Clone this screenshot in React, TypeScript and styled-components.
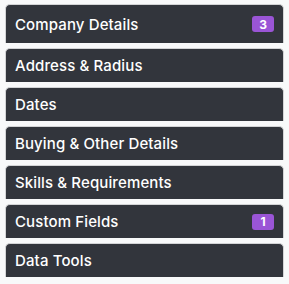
import React from 'react';
import styled, { createGlobalStyle } from 'styled-components';

const GlobalStyle = createGlobalStyle`
  html, body {
    margin: 0;
    padding: 0;
    background: #f8f9fa;
    font-family: Inter, "Noto Sans", sans-serif;
  }
`;

const List = styled.div`
  display: flex;
  flex-direction: column;
  gap: 5px;
  padding: 4px 5px 0 5px;
`;

const Header = styled.div<{ $tall?: boolean }>`
  display: flex;
  align-items: center;
  justify-content: space-between;
  box-sizing: border-box;
  height: ${(p) => (p.$tall ? '39px' : '34px')};
  padding: 0 9px 0 9px;
  background: #32353c;
  border: 1px solid #d3d4d6;
  border-bottom: none;
  border-radius: 5px 5px 0 0;
  color: #ffffff;
  font-size: 15px;
  font-weight: 500;
  letter-spacing: 0.12px;
  cursor: pointer;
`;

const Badge = styled.span`
  display: inline-flex;
  align-items: center;
  justify-content: center;
  min-width: 22px;
  height: 16px;
  padding: 0 5px;
  box-sizing: border-box;
  border-radius: 3px;
  background: #9a55d6;
  color: #fff;
  font-size: 12px;
  font-weight: 700;
  letter-spacing: 0;
`;

const sections = [
  { title: 'Company Details', count: 3, tall: true },
  { title: 'Address & Radius' },
  { title: 'Dates' },
  { title: 'Buying & Other Details' },
  { title: 'Skills & Requirements' },
  { title: 'Custom Fields', count: 1 },
  { title: 'Data Tools' },
];

const App = () => {
  return (
    <>
      <GlobalStyle />
      <List>
        {sections.map((s) => (
          <Header key={s.title} $tall={s.tall}>
            <span>{s.title}</span>
            {s.count ? <Badge>{s.count}</Badge> : null}
          </Header>
        ))}
      </List>
    </>
  );
};

export default App;
